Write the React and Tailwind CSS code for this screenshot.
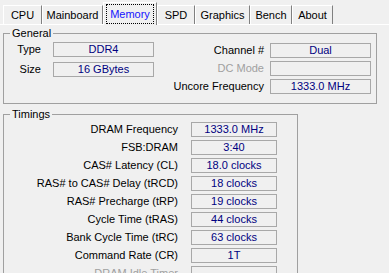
import React from 'react';

const tabs = [
  { name: 'CPU', w: 'w-[39px]' },
  { name: 'Mainboard', w: 'w-[61px]' },
  { name: 'Memory', w: 'w-[54px]', active: true },
  { name: 'SPD', w: 'w-[38px]' },
  { name: 'Graphics', w: 'w-[55px]' },
  { name: 'Bench', w: 'w-[42px]' },
  { name: 'About', w: 'w-[41px]' },
];

const timings = [
  ['DRAM Frequency', '1333.0 MHz'],
  ['FSB:DRAM', '3:40'],
  ['CAS# Latency (CL)', '18.0 clocks'],
  ['RAS# to CAS# Delay (tRCD)', '18 clocks'],
  ['RAS# Precharge (tRP)', '19 clocks'],
  ['Cycle Time (tRAS)', '44 clocks'],
  ['Bank Cycle Time (tRC)', '63 clocks'],
  ['Command Rate (CR)', '1T'],
  ['DRAM Idle Timer', '', true],
];

const Field = ({ children }) => (
  <div className="h-[15px] border border-[#a8a8a8] bg-[#f0f0f0] flex items-center justify-center text-[#000080] leading-none">
    {children}
  </div>
);

const Label = ({ children, off }) => (
  <div className={off ? 'text-right leading-none text-[#a0a0a0]' : 'text-right leading-none text-black'}>{children}</div>
);

export default function App() {
  return (
    <div className="w-[389px] h-[273px] overflow-hidden bg-[#f0f0f0] font-['Liberation_Sans',Arial,sans-serif] text-[11px] text-black">
      {/* tab strip */}
      <div className="h-[25px] flex items-end pl-[3px] border-b border-white">
        {tabs.map((t) =>
          t.active ? (
            <div
              key={t.name}
              className={`${t.w} h-[23px] -mb-px z-10 bg-[#f0f0f0] border-t border-l border-r border-t-white border-l-white border-r-[#808080] flex items-start justify-center pt-[2px]`}
            >
              <span className="h-[18px] px-[3px] flex items-center outline-1 outline-dotted outline-black text-[#1414ff]">{t.name}</span>
            </div>
          ) : (
            <div
              key={t.name}
              className={`${t.w} h-[19px] border-t border-l border-r border-t-white border-l-white border-r-[#808080] flex items-center justify-center`}
            >
              {t.name}
            </div>
          )
        )}
      </div>

      {/* General */}
      <fieldset className="ml-[3px] mt-[2px] w-[374px] h-[77px] border border-[#a0a0a0]">
        <legend className="ml-[6px] px-[2px] leading-[13px]">General</legend>
        <div className="flex justify-between items-start">
          <div className="grid grid-cols-[37px_101px] gap-x-[12px] gap-y-[5px] items-center content-start pt-[2px]">
            <Label>Type</Label>
            <Field>DDR4</Field>
            <Label>Size</Label>
            <Field>16 GBytes</Field>
          </div>
          <div className="grid grid-cols-[auto_101px] gap-x-[6px] gap-y-[3px] items-center content-start pt-[3px] pr-[5px]">
            <Label>Channel #</Label>
            <Field>Dual</Field>
            <Label off>DC Mode</Label>
            <Field></Field>
            <Label>Uncore Frequency</Label>
            <Field>1333.0 MHz</Field>
          </div>
        </div>
      </fieldset>

      {/* Timings */}
      <fieldset className="ml-[3px] mt-[4px] w-[295px] h-[200px] border border-[#a0a0a0]">
        <legend className="ml-[6px] px-[2px] leading-[13px]">Timings</legend>
        <div className="grid grid-cols-[174px_86px] gap-x-[13px] gap-y-[3px] items-center content-start pt-[1px]">
          {timings.map(([k, v, off]) => (
            <React.Fragment key={k}>
              <Label off={off}>{k}</Label>
              <Field>{v}</Field>
            </React.Fragment>
          ))}
        </div>
      </fieldset>
    </div>
  );
}
